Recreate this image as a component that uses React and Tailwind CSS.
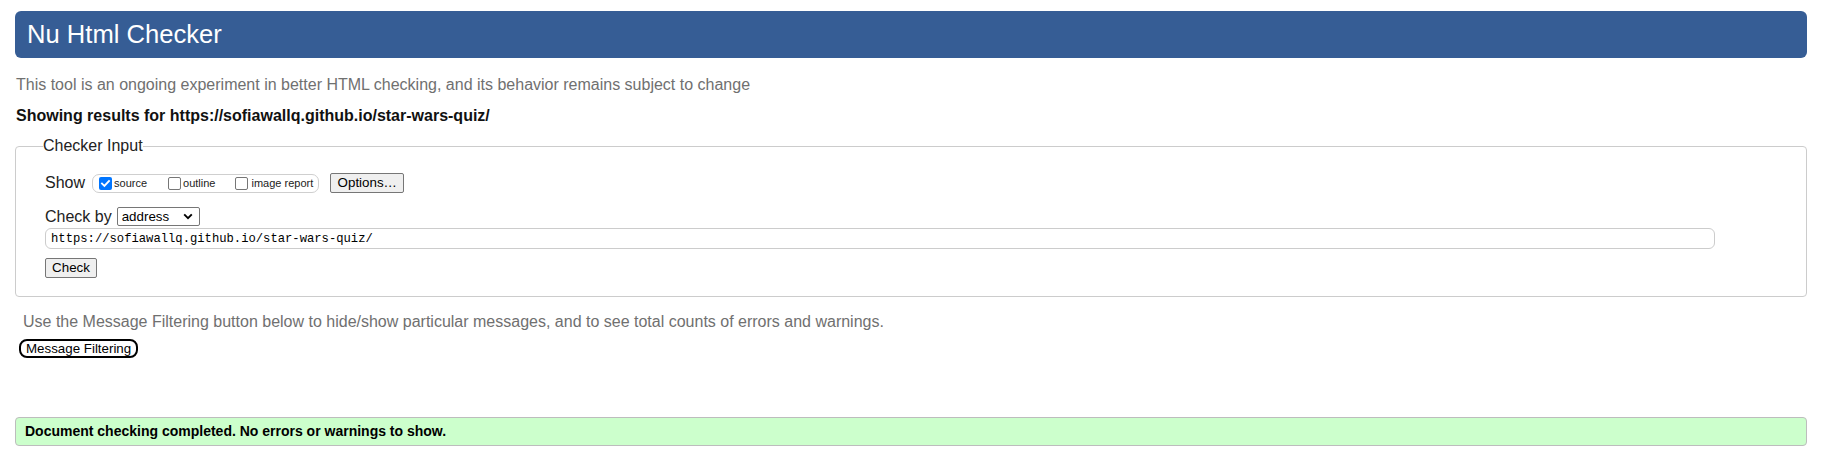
import React from "react";

function Box({ checked }) {
  if (checked) {
    return (
      <span className="inline-flex h-[13px] w-[13px] items-center justify-center rounded-[2px] bg-[#0075ff]">
        <svg width="11" height="11" viewBox="0 0 11 11" fill="none">
          <path d="M2 5.6 L4.4 8 L9 3" stroke="white" strokeWidth="1.9" strokeLinecap="square" />
        </svg>
      </span>
    );
  }
  return <span className="inline-block h-[13px] w-[13px] rounded-[2px] border border-[#767676] bg-white" />;
}

export default function App() {
  return (
    <div className="min-h-[459px] bg-white pl-[15px] pr-[16px] font-['Liberation_Sans',Arial,sans-serif] text-[16px] text-[#222]">
      <div className="mt-[11px] flex h-[47px] items-center rounded-[6px] bg-[#365d95] pl-[12px] text-[25.6px] text-white">
        Nu Html Checker
      </div>
      <p className="mt-[18px] pl-[1px] leading-[18px] text-[#707070]">
        This tool is an ongoing experiment in better HTML checking, and its behavior remains subject to change
      </p>
      <p className="mt-[13px] pl-[1px] font-bold leading-[18px] text-[#111]">
        Showing results for https://sofiawallq.github.io/star-wars-quiz/
      </p>
      <fieldset className="mt-[12px] rounded-[4px] border border-[#cccccc] pb-[18px] pl-[29px]">
        <legend className="-ml-[2px] leading-[18px] text-[#222]">Checker Input</legend>
        <div className="mt-[18px] flex h-[20px] items-center">
          <span>Show</span>
          <span className="ml-[7px] flex h-[19px] items-center rounded-[7px] border border-[#cfcfcf] pl-[6px] pr-[5px] text-[11px]">
            <span className="flex items-center">
              <Box checked />
              <span className="ml-[2px]">source</span>
            </span>
            <span className="ml-[21px] flex items-center">
              <Box />
              <span className="ml-[2px]">outline</span>
            </span>
            <span className="ml-[20px] flex items-center">
              <Box />
              <span className="ml-[3px]">image report</span>
            </span>
          </span>
          <button className="ml-[11px] flex h-[20px] w-[74px] items-center justify-center rounded-[2px] border border-[#767676] bg-[#efefef] text-[13.33px] text-black">
            Options…
          </button>
        </div>
        <div className="mt-[14px] flex h-[19px] items-center">
          <span>Check by</span>
          <div className="ml-[5px] flex h-[19px] w-[83px] items-center justify-between rounded-[2px] border border-[#767676] bg-white pl-[4px] pr-[6px] text-[13.33px] text-black">
            <span>address</span>
            <svg width="10" height="7" viewBox="0 0 10 7" fill="none">
              <path d="M1.2 1.4 L5 5.2 L8.8 1.4" stroke="black" strokeWidth="1.9" />
            </svg>
          </div>
        </div>
        <input
          readOnly
          value="https://sofiawallq.github.io/star-wars-quiz/"
          className="mt-[2px] block h-[21px] w-[1670px] rounded-[6px] border border-[#cccccc] pl-[5px] font-['Liberation_Mono',monospace] text-[12.2px] text-black outline-none"
        />
        <button className="mt-[9px] flex h-[20px] w-[52px] items-center justify-center rounded-[2px] border border-[#767676] bg-[#efefef] text-[13.33px] text-black">
          Check
        </button>
      </fieldset>
      <p className="mt-[16px] pl-[8px] leading-[18px] text-[#707070]">
        Use the Message Filtering button below to hide/show particular messages, and to see total counts of errors and warnings.
      </p>
      <button className="ml-[4px] mt-[8px] flex h-[19px] items-center rounded-[8px] border-2 border-black bg-white px-[5px] text-[13.33px] leading-none text-black">
        Message Filtering
      </button>
      <div className="mt-[59px] flex h-[29px] items-center rounded-[4px] border border-[#bdbdbd] bg-[#ccffcc] pl-[9px] text-[14px] font-bold text-black">
        Document checking completed. No errors or warnings to show.
      </div>
    </div>
  );
}
